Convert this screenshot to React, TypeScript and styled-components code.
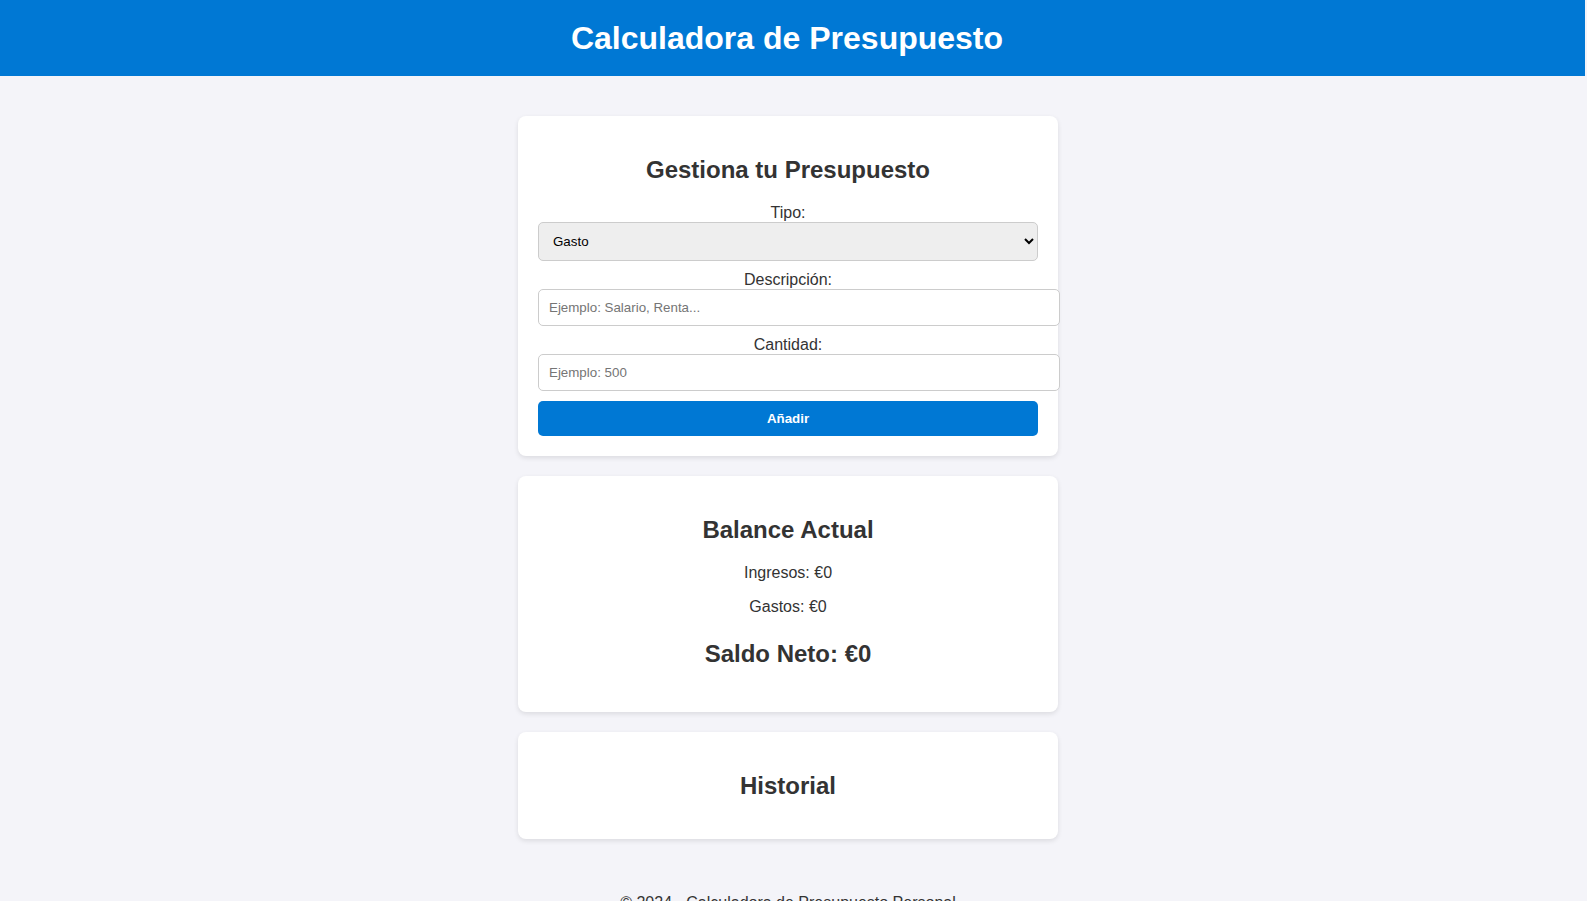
import React, { useState } from 'react';
import styled, { createGlobalStyle } from 'styled-components';

const GlobalStyle = createGlobalStyle`
  body {
    margin: 0;
    font-family: Arial, "Liberation Sans", sans-serif;
    background: #f4f4f9;
    color: #333;
  }
`;

// the page is laid out as if a scrollbar took ~11px on the right
const Header = styled.header`
  background: #0078d4;
  color: white;
  padding: 20px 31px 20px 20px;
  margin-right: 2px;
  text-align: center;

  h1 {
    margin: 0;
    font-size: 32px;
    line-height: 36px;
  }
`;

const Main = styled.main`
  padding: 20px 31px 20px 20px;
`;

const Card = styled.section`
  background: white;
  max-width: 500px;
  margin: 20px auto;
  padding: 20px;
  border-radius: 8px;
  box-shadow: 0 2px 5px rgba(0, 0, 0, 0.1);
  text-align: center;

  h2 {
    font-size: 24px;
    margin: 19.92px 0;
  }
`;

const Label = styled.label`
  display: block;
  font-size: 16px;
`;

const Select = styled.select`
  width: 100%;
  padding: 10px;
  margin-bottom: 10px;
  border: 1px solid #ccc;
  border-radius: 5px;
  background: #eee;
  font-family: Arial, "Liberation Sans", sans-serif;
  font-size: 13.33px;
  color: #000;
`;

const Input = styled.input`
  width: 100%;
  padding: 10px;
  margin-bottom: 10px;
  border: 1px solid #ccc;
  border-radius: 5px;
  background: white;
  font-family: Arial, "Liberation Sans", sans-serif;
  font-size: 13.33px;
  display: block;

  &::placeholder {
    color: #757575;
  }
`;

const Button = styled.button`
  width: 100%;
  padding: 10px;
  border: none;
  border-radius: 5px;
  background: #0078d4;
  color: white;
  font-family: Arial, "Liberation Sans", sans-serif;
  font-size: 13.33px;
  font-weight: bold;
  cursor: pointer;

  &:hover {
    background: #005fa3;
  }
`;

const Line = styled.p`
  font-size: 16px;
  margin: 16px 0;
`;

const Total = styled.p`
  font-size: 24px;
  font-weight: bold;
  margin: 24px 0;
`;

const History = styled.ul`
  list-style: none;
  padding: 0;
  margin: 16px 0;
`;

const Footer = styled.footer`
  text-align: center;
  padding: 15px 31px 15px 20px;
  font-size: 16px;
`;

export default function App() {
  const [tipo, setTipo] = useState('gasto');
  const [desc, setDesc] = useState('');
  const [cantidad, setCantidad] = useState('');

  return (
    <>
      <GlobalStyle />
      <Header>
        <h1>Calculadora de Presupuesto</h1>
      </Header>
      <Main>
        <Card>
          <h2>Gestiona tu Presupuesto</h2>
          <form onSubmit={e => e.preventDefault()}>
            <Label htmlFor="tipo">Tipo:</Label>
            <Select id="tipo" value={tipo} onChange={e => setTipo(e.target.value)}>
              <option value="ingreso">Ingreso</option>
              <option value="gasto">Gasto</option>
            </Select>
            <Label htmlFor="desc">Descripción:</Label>
            <Input
              id="desc"
              type="text"
              placeholder="Ejemplo: Salario, Renta..."
              value={desc}
              onChange={e => setDesc(e.target.value)}
            />
            <Label htmlFor="cantidad">Cantidad:</Label>
            <Input
              id="cantidad"
              type="number"
              placeholder="Ejemplo: 500"
              value={cantidad}
              onChange={e => setCantidad(e.target.value)}
            />
            <Button type="submit">Añadir</Button>
          </form>
        </Card>
        <Card>
          <h2>Balance Actual</h2>
          <Line>Ingresos: €0</Line>
          <Line>Gastos: €0</Line>
          <Total>Saldo Neto: €0</Total>
        </Card>
        <Card>
          <h2>Historial</h2>
          <History />
        </Card>
      </Main>
      <Footer>© 2024 - Calculadora de Presupuesto Personal</Footer>
    </>
  );
}
